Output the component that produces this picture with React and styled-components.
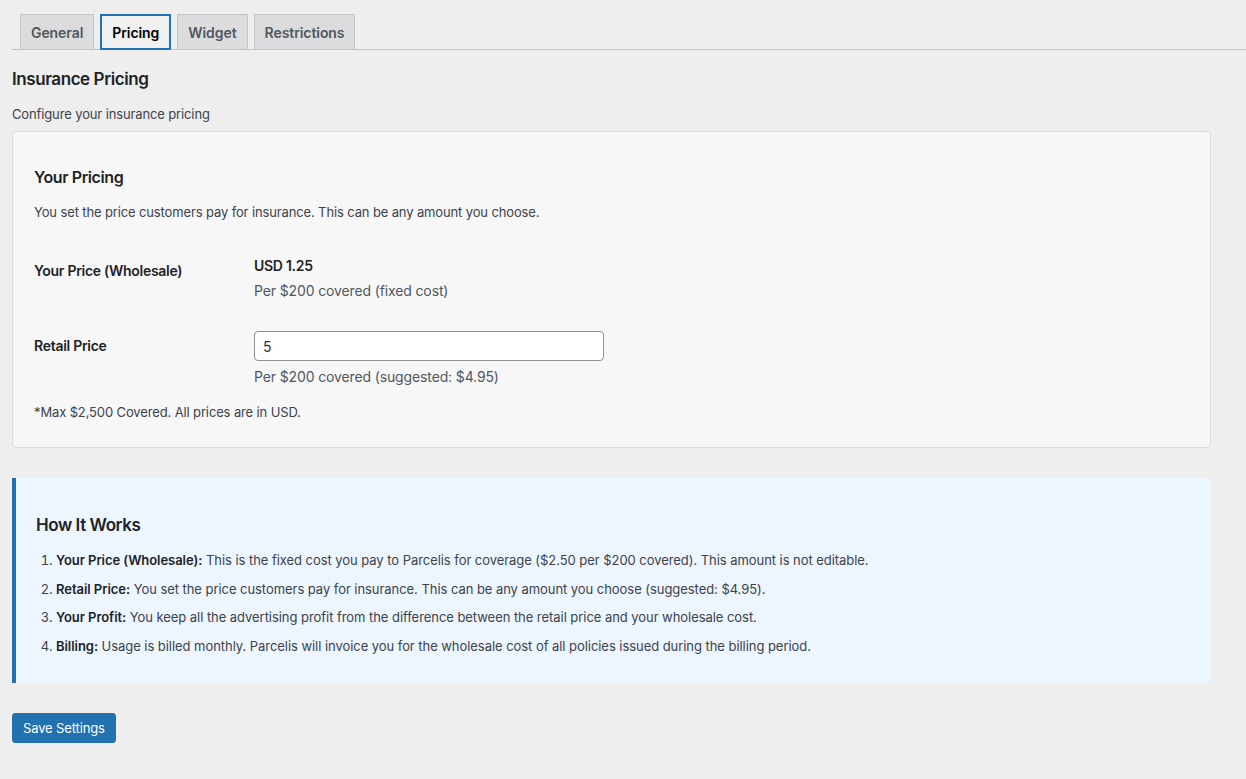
import React from 'react'
import styled, { createGlobalStyle } from 'styled-components'

const GlobalStyle = createGlobalStyle`
    html, body {
        margin: 0;
        padding: 0;
        background: #eeeeee;
    }
    body {
        font-family: Inter, "Liberation Sans", sans-serif;
        font-size: 13px;
        letter-spacing: -0.01em;
        color: #3c434a;
    }
`

const tabs = ['General', 'Pricing', 'Widget', 'Restrictions']

const steps = [
    { title: 'Your Price (Wholesale):', text: 'This is the fixed cost you pay to Parcelis for coverage ($2.50 per $200 covered). This amount is not editable.' },
    { title: 'Retail Price:', text: 'You set the price customers pay for insurance. This can be any amount you choose (suggested: $4.95).' },
    { title: 'Your Profit:', text: 'You keep all the advertising profit from the difference between the retail price and your wholesale cost.' },
    { title: 'Billing:', text: 'Usage is billed monthly. Parcelis will invoice you for the wholesale cost of all policies issued during the billing period.' },
]

const App = () => {
    return (
        <>
            <GlobalStyle />
            <Page>
                <TabBar>
                    {tabs.map(t => (
                        <Tab key={t} $active={t === 'Pricing'}>{t}</Tab>
                    ))}
                </TabBar>
                <Content>
                    <PageTitle>Insurance Pricing</PageTitle>
                    <Lead>Configure your insurance pricing</Lead>

                    <Card>
                        <CardTitle>Your Pricing</CardTitle>
                        <Lead>You set the price customers pay for insurance. This can be any amount you choose.</Lead>
                        <FormTable>
                            <FormRow>
                                <Label>Your Price (Wholesale)</Label>
                                <Field>
                                    <Amount>USD 1.25</Amount>
                                    <Hint>Per $200 covered (fixed cost)</Hint>
                                </Field>
                            </FormRow>
                            <FormRow>
                                <Label>Retail Price</Label>
                                <Field>
                                    <PriceInput type="text" defaultValue="5" />
                                    <Hint>Per $200 covered (suggested: $4.95)</Hint>
                                </Field>
                            </FormRow>
                        </FormTable>
                        <Footnote>*Max $2,500 Covered. All prices are in USD.</Footnote>
                    </Card>

                    <InfoBox>
                        <InfoTitle>How It Works</InfoTitle>
                        <Steps>
                            {steps.map(s => (
                                <li key={s.title}><strong>{s.title}</strong> {s.text}</li>
                            ))}
                        </Steps>
                    </InfoBox>

                    <SaveButton>Save Settings</SaveButton>
                </Content>
            </Page>
        </>
    )
}

export default App

const Page = styled.div`
    padding: 14px 0 36px 12px;
`
const TabBar = styled.nav`
    display: flex;
    gap: 6px;
    padding-left: 8px;
    border-bottom: 1px solid #c3c4c7;
    height: 35px;
    align-items: flex-end;
`
const Tab = styled.a`
    box-sizing: border-box;
    height: 36px;
    margin-bottom: -1px;
    padding: 0 10px;
    display: flex;
    align-items: center;
    font-size: 14px;
    font-weight: 600;
    letter-spacing: -0.005em;
    color: ${p => p.$active ? '#000' : '#50575e'};
    background: ${p => p.$active ? '#f0f0f1' : '#dcdcde'};
    border: ${p => p.$active ? '2px solid #2271b1' : '1px solid #c3c4c7'};
    border-bottom-color: ${p => p.$active ? '#2271b1' : '#c3c4c7'};
    cursor: pointer;
`
const Content = styled.div`
    padding-right: 35px;
`
const PageTitle = styled.h1`
    margin: 18px 0 14px;
    font-size: 17px;
    line-height: 22px;
    font-weight: 600;
    letter-spacing: -0.025em;
    color: #1d2327;
`
const Lead = styled.p`
    margin: 0;
    font-size: 13px;
    line-height: 20px;
    color: #3c434a;
`
const Card = styled.section`
    margin-top: 7px;
    padding: 34px 21px 25px;
    background: #f7f7f7;
    border: 1px solid #dcdcde;
    border-radius: 4px;
`
const CardTitle = styled.h2`
    margin: 0 0 14px;
    font-size: 16px;
    line-height: 22px;
    font-weight: 600;
    letter-spacing: -0.025em;
    color: #1d2327;
`
const FormTable = styled.div`
    margin-top: 19px;
    display: flex;
    flex-direction: column;
`
const FormRow = styled.div`
    display: grid;
    grid-template-columns: 220px 1fr;
`
const Label = styled.div`
    padding: 21px 0 19px;
    font-size: 14px;
    line-height: 18px;
    font-weight: 600;
    letter-spacing: -0.02em;
    color: #1d2327;
`
const Field = styled.div`
    padding: 15px 0;
    display: flex;
    flex-direction: column;
    align-items: flex-start;
`
const Amount = styled.strong`
    margin-top: 1px;
    font-size: 14px;
    line-height: 18px;
    font-weight: 600;
    letter-spacing: -0.02em;
    color: #1d2327;
`
const Hint = styled.span`
    margin-top: 6px;
    font-size: 14px;
    line-height: 20px;
    color: #50575e;
`
const PriceInput = styled.input`
    box-sizing: border-box;
    width: 350px;
    height: 30px;
    padding: 0 8px;
    font-family: inherit;
    font-size: 14px;
    color: #2c3338;
    background: #fff;
    border: 1px solid #8c8f94;
    border-radius: 4px;
    outline: none;
`
const Footnote = styled.p`
    margin: 0;
    font-size: 13px;
    line-height: 20px;
    color: #3c434a;
`
const InfoBox = styled.section`
    margin-top: 30px;
    padding: 36px 20px 26px;
    background: #edf5fe;
    border-left: 4px solid #2271b1;
    border-radius: 0 4px 4px 0;
`
const InfoTitle = styled.h3`
    margin: 0 0 13px;
    font-size: 17px;
    line-height: 22px;
    font-weight: 600;
    letter-spacing: -0.025em;
    color: #1d2327;
`
const Steps = styled.ol`
    margin: 0;
    padding-left: 20px;
    font-size: 13px;
    line-height: 22.5px;
    letter-spacing: -0.004em;
    color: #3c434a;

    & li {
        margin-bottom: 6px;
    }
    & li:last-child {
        margin-bottom: 0;
    }
    & strong {
        font-weight: 600;
        color: #1d2327;
    }
`
const SaveButton = styled.button`
    margin-top: 30px;
    height: 30px;
    padding: 0 10px;
    font-family: inherit;
    font-size: 13px;
    letter-spacing: -0.01em;
    color: #fff;
    background: #2271b1;
    border: 1px solid #2271b1;
    border-radius: 3px;
    cursor: pointer;
`
